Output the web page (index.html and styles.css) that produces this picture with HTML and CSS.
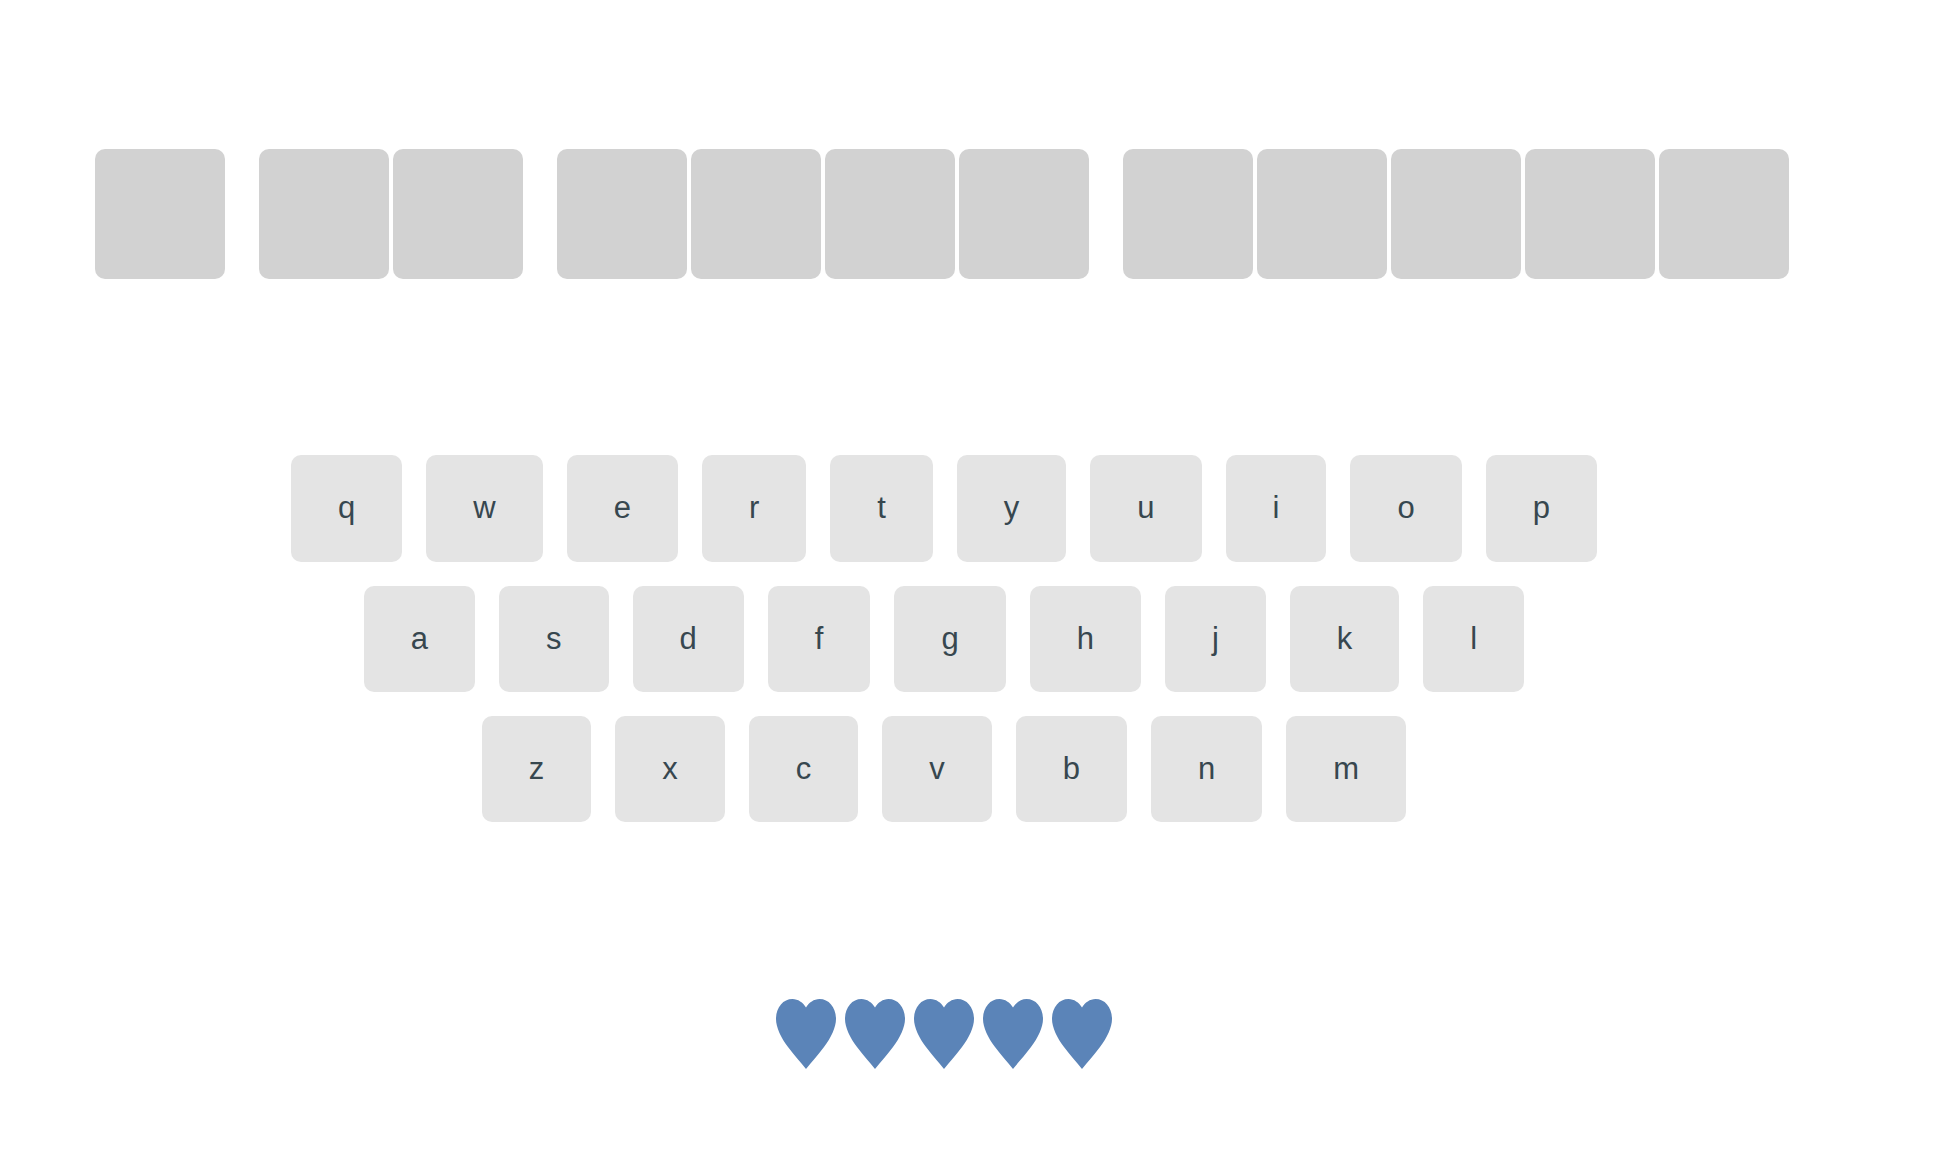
FILE: index.html
```html
<!DOCTYPE html>
<html lang="en">
  <head>
    <title>Hangman</title>

    <link rel="stylesheet" href="styles.css">
  </head>

  <body>
    <svg class="defs" width="0" height="0">
      <symbol id="heart" viewBox="0 0 60 70">
        <path d="M30 8.5C27 3.5 22 0 16.5 0 7 0 0 8.5 0 20 0 28 5 39 12 48 18 56 24 62.5 30 70 36 62.5 42 56 48 48 55 39 60 28 60 20 60 8.5 53 0 43.5 0 38 0 33 3.5 30 8.5Z" />
      </symbol>
    </svg>

    <div class="game">
      <div class="board">
        <div class="word">
          <div class="tile"></div>
        </div>
        <div class="word">
          <div class="tile"></div>
          <div class="tile"></div>
        </div>
        <div class="word">
          <div class="tile"></div>
          <div class="tile"></div>
          <div class="tile"></div>
          <div class="tile"></div>
        </div>
        <div class="word">
          <div class="tile"></div>
          <div class="tile"></div>
          <div class="tile"></div>
          <div class="tile"></div>
          <div class="tile"></div>
        </div>
      </div>

      <div class="keyboard">
        <div class="row">
          <button class="key">q</button>
          <button class="key">w</button>
          <button class="key">e</button>
          <button class="key">r</button>
          <button class="key">t</button>
          <button class="key">y</button>
          <button class="key">u</button>
          <button class="key">i</button>
          <button class="key">o</button>
          <button class="key">p</button>
        </div>
        <div class="row">
          <button class="key">a</button>
          <button class="key">s</button>
          <button class="key">d</button>
          <button class="key">f</button>
          <button class="key">g</button>
          <button class="key">h</button>
          <button class="key">j</button>
          <button class="key">k</button>
          <button class="key">l</button>
        </div>
        <div class="row">
          <button class="key">z</button>
          <button class="key">x</button>
          <button class="key">c</button>
          <button class="key">v</button>
          <button class="key">b</button>
          <button class="key">n</button>
          <button class="key">m</button>
        </div>
      </div>

      <div class="lives">
        <svg class="heart"><use href="#heart" /></svg>
        <svg class="heart"><use href="#heart" /></svg>
        <svg class="heart"><use href="#heart" /></svg>
        <svg class="heart"><use href="#heart" /></svg>
        <svg class="heart"><use href="#heart" /></svg>
      </div>
    </div>
  </body>
</html>
```

FILE: styles.css
```css
body {
  margin: 0;
  background: white;
  font-family: "Liberation Sans", Arial, sans-serif;
}
.defs {
  display: block;
  height: 0;
}
.game {
  width: 1888px;
  padding-top: 149px;
}
.board {
  display: flex;
  justify-content: center;
  gap: 30px;
}
.word {
  display: flex;
}
.tile {
  width: 130px;
  height: 130px;
  margin-right: 4px;
  background: rgb(210, 210, 210);
  border-radius: 10px;
}
.keyboard {
  display: flex;
  flex-direction: column;
  gap: 24px;
  margin-top: 176.2px;
}
.row {
  display: flex;
  justify-content: center;
  gap: 24px;
}
.key {
  height: 106.4px;
  padding: 0 47px;
  background: rgb(228, 228, 228);
  border: none;
  border-radius: 10px;
  color: rgb(55, 71, 79);
  font-family: inherit;
  font-size: 31px;
}
.lives {
  display: flex;
  justify-content: center;
  gap: 9px;
  margin-top: 176.6px;
}
.heart {
  width: 60px;
  height: 70px;
  fill: rgb(91, 132, 184);
}
```
